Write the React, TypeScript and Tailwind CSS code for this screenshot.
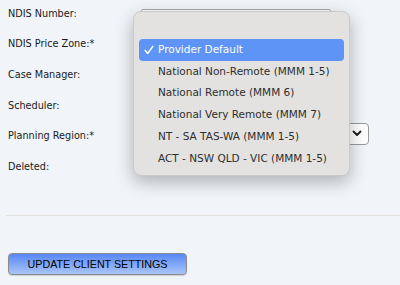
import React from 'react'

const labelFont = { fontFamily: '"DejaVu Sans", Verdana, sans-serif' }

const zones = [
  'National Non-Remote (MMM 1-5)',
  'National Remote (MMM 6)',
  'National Very Remote (MMM 7)',
  'NT - SA TAS-WA (MMM 1-5)',
  'ACT - NSW QLD - VIC (MMM 1-5)',
]

function Row({ label, children }: { label: string; children?: React.ReactNode }) {
  return (
    <div className="flex h-[30.6px] items-center">
      <div className="w-[133px] shrink-0 text-[9.7px] text-[#1a1a1a]" style={labelFont}>{label}</div>
      <div className="flex flex-1 items-center">{children}</div>
    </div>
  )
}

function Check() {
  return (
    <svg width="10" height="10" viewBox="0 0 10 10" className="shrink-0">
      <path d="M1.2 5.4 L3.8 8.4 L8.8 1.4" fill="none" stroke="white" strokeWidth="1.6" strokeLinecap="round" strokeLinejoin="round" />
    </svg>
  )
}

export default function App() {
  return (
    <div className="relative h-[285px] w-[400px] overflow-hidden bg-[#f1f4f8]">
      <div className="-mt-[1.3px] px-2">
        <Row label="NDIS Number:">
          <div className="self-start mt-[9.3px] h-[20px] w-[190px] rounded-[2px] border border-[#a9a9a9] bg-white px-[6px] text-[11px] leading-[13px] text-[#222]" style={labelFont}>
            4300 123 456
          </div>
        </Row>
        <Row label="NDIS Price Zone:*" />
        <Row label="Case Manager:" />
        <Row label="Scheduler:" />
        <Row label="Planning Region:*">
          <div className="flex h-[22px] w-[228px] -mt-[5px] items-center justify-end rounded-[4px] border border-[#9a9a9a] bg-white pr-[6px]">
            <svg width="10" height="7" viewBox="0 0 10 7">
              <path d="M1.5 1.5 L5 5 L8.5 1.5" fill="none" stroke="#1a1a1a" strokeWidth="1.8" strokeLinecap="round" strokeLinejoin="round" />
            </svg>
          </div>
        </Row>
        <Row label="Deleted:">
          <div className="mt-[8px] flex items-center gap-[6px] text-[10px] text-[#222]" style={labelFont}>
            <span className="h-[11px] w-[11px] rounded-full border border-[#9a9a9a] bg-white" />
            <span className="mr-[14px]">Yes</span>
            <span className="h-[11px] w-[11px] rounded-full border-[3px] border-[#3f7ef0] bg-white" />
            <span>No</span>
          </div>
        </Row>
      </div>

      <div className="ml-[6px] mt-[33px] h-px bg-[#e4e0dc]" />

      <div className="mt-[33.5px] px-2">
        <button
          className="h-[22px] w-[179px] rounded-[4px] border border-[#8c8c8c] bg-gradient-to-b from-[#5887f5] to-[#a9c4f6] text-[10.7px] text-black shadow-[0_1px_1px_rgba(0,0,0,0.15)]"
          style={{ fontFamily: '"Liberation Sans", Arial, sans-serif' }}
        >
          UPDATE CLIENT SETTINGS
        </button>
      </div>

      <div
        className="absolute left-[133px] top-[10.5px] flex h-[165px] w-[217px] flex-col rounded-[8px] border border-[#cbcac8] bg-[#e3e2e0] px-[5px] pb-[5px] pt-[5.5px] shadow-[0_6px_18px_rgba(0,0,0,0.28)]"
        style={labelFont}
      >
        <div className="h-[22px]" />
        <div className="flex h-[22px] items-center gap-[4px] rounded-[4px] bg-[#5f94f7] pl-[5px] text-[10.5px] text-white">
          <Check />
          <span>Provider Default</span>
        </div>
        {zones.map((z) => (
          <div key={z} className="flex h-[22px] items-center pl-[19px] text-[10.5px] text-[#2e2e2e]">
            {z}
          </div>
        ))}
      </div>
    </div>
  )
}
